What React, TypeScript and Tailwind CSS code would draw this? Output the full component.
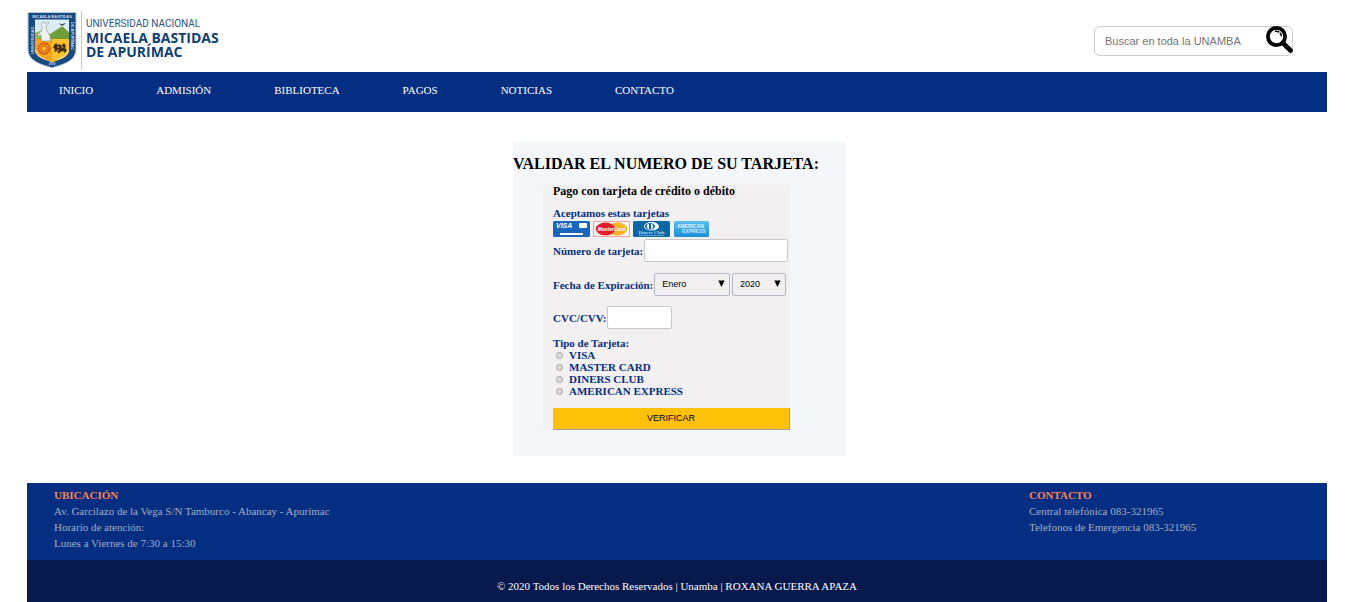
import React from "react";

const navItems = ["INICIO", "ADMISIÓN", "BIBLIOTECA", "PAGOS", "NOTICIAS", "CONTACTO"];
const cardTypes = ["VISA", "MASTER CARD", "DINERS CLUB", "AMERICAN EXPRESS"];
const months = [
  "Enero", "Febrero", "Marzo", "Abril", "Mayo", "Junio",
  "Julio", "Agosto", "Septiembre", "Octubre", "Noviembre", "Diciembre",
];
const years = ["2020", "2021", "2022", "2023", "2024", "2025"];

function Crest() {
  return (
    <svg viewBox="0 0 50 58" className="h-[58px] w-[50px] shrink-0" aria-hidden="true">
      <path d="M1 1.500h48v37c0 9-8 13-15 15.500-4 1.300-7 2-9 3-2-1-5-1.700-9-3C9 51.500 1 47.500 1 38.500z" fill="#174a80" stroke="#b9c9dc" strokeWidth="1" />
      <path d="M8 8.500h34v30c0 6-6 9-11 10.500-3 1-5 1.500-6 2.500-1-1-3-1.500-6-2.500-5-1.500-11-4.500-11-10.500z" fill="#d9edf6" />
      <path d="M8 22l7-3 6 5 8-5 6-4 7 6v10H8z" fill="#93b64a" />
      <path d="M20 26l10-7 6-3 6 6v8H20z" fill="#6e9d3a" />
      <path d="M8 28h34v10.500c0 6-6 9-11 10.500-3 1-5 1.500-6 2.500-1-1-3-1.500-6-2.500-5-1.500-11-4.500-11-10.500z" fill="#f6a31c" />
      <path d="M25 28h17v10.500c0 6-6 9-11 10.500-3 1-5 1.500-6 2.500z" fill="#fac12b" />
      <path d="M17 10.500l1.500 2.500 3-2 .5 1-3 3 1 5 3 5 .5 5h-9l-.5-6-3 1-.5-1 4-4 1-4-1.500-3z" fill="#eef1f0" stroke="#8b9a8d" strokeWidth=".6" />
      <path d="M32 12l2.500 1.300L39 12l-3 2.500h-2z" fill="#33434b" />
      <circle cx="17" cy="37.500" r="5.500" fill="#f58a12" stroke="#c64a17" strokeWidth="1.500" strokeDasharray="1.500 .8" />
      <circle cx="17" cy="37.500" r="2.700" fill="#fbc02d" stroke="#b94c1a" strokeWidth=".8" />
      <path d="M27 34l2-2 2 2 2-1 1 2 3-3 2 3-1 2 2 2-2 3-2-2-3 1-1 2-2-3-3 1 1-3-2-1z" fill="#432e1d" />
      <path d="M30 35l2 2m3-2l1 2m-6 3l2-1" stroke="#fac12b" strokeWidth=".9" />
      <path d="M8.500 39c1 5 6 8 10.500 9.300M41.500 39c-1 5-6 8-10.500 9.300" stroke="#fff" strokeWidth=".7" fill="none" />
      <text x="25" y="6.500" textAnchor="middle" fill="#cfdae6" className="font-['Liberation_Sans'] text-[4px] font-bold">MICAELA BASTIDAS</text>
      <text transform="translate(6.500 43) rotate(-90)" fill="#cfdae6" className="font-['Liberation_Sans'] text-[4px] font-bold">UNIVERSIDAD</text>
      <text transform="translate(43.500 11) rotate(90)" fill="#cfdae6" className="font-['Liberation_Sans'] text-[4px] font-bold">DE APURÍMAC</text>
      <text x="25" y="54" textAnchor="middle" fill="#cfdae6" className="font-['Liberation_Sans'] text-[3px] font-bold">2000</text>
    </svg>
  );
}

function Magnifier() {
  return (
    <svg viewBox="0 0 27 27" className="h-[27px] w-[27px]" aria-hidden="true">
      <circle cx="10.500" cy="10.500" r="8.600" fill="#fff" stroke="#000" strokeWidth="3.800" />
      <path d="M17 17l7.500 7.500" stroke="#000" strokeWidth="4.600" strokeLinecap="round" />
      <path d="M9.500 5.200c1.300-.1 2.300.1 3.200.7M14.300 7.300c.6.700.9 1.400 1 2.400" fill="none" stroke="#000" strokeWidth="1.500" strokeLinecap="round" />
    </svg>
  );
}

function CardLogos() {
  return (
    <div className="mt-0.5 flex h-4 gap-[3px]">
      <svg viewBox="0 0 37 16" className="h-4 w-[37px]" role="img" aria-label="Visa">
        <rect width="37" height="16" rx="1.500" fill="#1866bd" />
        <text x="3" y="7" fill="#fff" className="font-['Liberation_Sans'] text-[7px] font-bold italic">VISA</text>
        <rect x="26" y="2" width="8" height="5" rx="1" fill="#fff" />
        <rect x="7" y="12" width="23" height="2" fill="#fff" />
      </svg>
      <svg viewBox="0 0 37 16" className="h-4 w-[37px]" role="img" aria-label="MasterCard">
        <rect x=".5" y=".5" width="36" height="15" fill="#fbf6f6" stroke="#f3a2a2" />
        <ellipse cx="24.500" cy="8" rx="9.800" ry="6.500" fill="#fbb323" />
        <ellipse cx="12.500" cy="8" rx="9.800" ry="6.500" fill="#e31b2d" />
        <text x="18.500" y="10" textAnchor="middle" fill="#fff" className="font-['Liberation_Sans'] text-[5px] font-bold italic">MasterCard</text>
      </svg>
      <svg viewBox="0 0 37 16" className="h-4 w-[37px]" role="img" aria-label="Diners Club">
        <rect width="37" height="16" rx="1.500" fill="#0768a5" />
        <ellipse cx="18.500" cy="5.300" rx="7.500" ry="4.300" fill="#fff" />
        <ellipse cx="17" cy="5.300" rx="5" ry="3.300" fill="#0768a5" />
        <path d="M16 2.500c-3 .8-3 4.800 0 5.600zm2 0c3 .8 3 4.800 0 5.600z" fill="#fff" />
        <text x="18.500" y="13" textAnchor="middle" fill="#b9d8ec" className="font-['Liberation_Serif'] text-[5px]">Diners Club</text>
        <path d="M6 14.500h25" stroke="#7fb4d6" strokeDasharray="1.500 .5" />
      </svg>
      <svg viewBox="0 0 37 16" className="h-4 w-[37px]" role="img" aria-label="American Express">
        <defs>
          <linearGradient id="amex" x1="0" y1="0" x2="0" y2="1">
            <stop offset="0" stopColor="#58c1ed" />
            <stop offset="1" stopColor="#1d8fd8" />
          </linearGradient>
        </defs>
        <rect x="1" width="35" height="16" rx="1.500" fill="url(#amex)" />
        <text x="4" y="7" fill="#e4f4fc" className="font-['Liberation_Sans'] text-[5px] font-bold">AMERICAN</text>
        <text x="9" y="12" fill="#c4e7f8" className="font-['Liberation_Sans'] text-[5px] font-bold">EXPRESS</text>
      </svg>
    </div>
  );
}

type DropDownProps = { id?: string; label?: string; options: string[]; className: string };

function DropDown({ id, label, options, className }: DropDownProps) {
  return (
    <span className={`relative ${className}`}>
      <select
        id={id}
        aria-label={label}
        className="block h-[23px] w-full appearance-none rounded-[2px] border border-[#b4b6c8] bg-[#f2f0f1] pb-0.5 pl-[7px] font-['Liberation_Sans',sans-serif] text-[9px] font-normal text-black"
      >
        {options.map((o) => (
          <option key={o}>{o}</option>
        ))}
      </select>
      <svg viewBox="0 0 7 7" className="pointer-events-none absolute top-[7px] right-[5px] size-[7px]" aria-hidden="true">
        <path d="M.3.500h6.400L3.500 7z" />
      </svg>
    </span>
  );
}

const textBox = "h-[23px] min-w-0 rounded-[2px] border border-[#c8c8c8] bg-white px-1.5 font-['Liberation_Sans',sans-serif] text-[9px] font-normal text-black";

export default function App() {
  return (
    <div className="mr-6 ml-[27px] font-['Liberation_Serif',serif] text-[11px] leading-3">
      <header className="flex items-start justify-between pr-[34px]">
        <a href="#inicio" className="mt-[11px] mb-[3px] flex text-[#114077]">
          <Crest />
          <span className="ml-1 border-l border-[#b8c7da] pt-1.5 pl-1 font-['Open_Sans',sans-serif] text-[14px] leading-[14px] font-bold">
            <span className="block font-['Roboto',sans-serif] text-[10px] font-normal text-[#2a5585]">UNIVERSIDAD NACIONAL</span>
            <span className="block">MICAELA BASTIDAS</span>
            <span className="block">DE APURÍMAC</span>
          </span>
        </a>
        <form className="relative mt-[26px]" onSubmit={(e) => e.preventDefault()}>
          <input
            type="search"
            aria-label="Buscar en toda la UNAMBA"
            placeholder="Buscar en toda la UNAMBA"
            className="block h-[30px] w-[199px] rounded-[6px] border border-[#ccc] pr-8 pl-2.5 font-['Liberation_Sans',sans-serif] text-[11px] placeholder:text-[#757575]"
          />
          <button type="submit" aria-label="Buscar" className="absolute top-0 right-0">
            <Magnifier />
          </button>
        </form>
      </header>

      <nav className="h-10 bg-[#042e82] px-8 pt-3 text-white">
        <ul className="flex gap-[63px]">
          {navItems.map((item) => (
            <li key={item}>
              <a href="#" className="hover:underline">{item}</a>
            </li>
          ))}
        </ul>
      </nav>

      <main className="flex justify-center pt-[30px] pb-[27px] pl-[5px]">
        <section className="w-[333px] bg-[#f3f7fa] pt-3 pb-[26px]">
          <h1 className="text-[16px] leading-5 font-bold whitespace-nowrap">VALIDAR EL NUMERO DE SU TARJETA:</h1>
          <form
            className="mt-[11px] mr-14 ml-[30px] bg-[#f3f0f1] pl-2.5 font-bold text-[#042e82]"
            onSubmit={(e) => e.preventDefault()}
          >
            <h2 className="text-[12px] text-black">Pago con tarjeta de crédito o débito</h2>
            <p className="mt-2.5">Aceptamos estas tarjetas</p>
            <CardLogos />
            <div className="mt-0.5 flex items-center gap-px pr-0.5">
              <label htmlFor="numero">Número de tarjeta:</label>
              <input id="numero" type="text" inputMode="numeric" className={`${textBox} flex-1`} />
            </div>
            <div className="mt-[11px] flex items-center gap-px pr-1">
              <label htmlFor="mes" className="whitespace-nowrap">Fecha de Expiración:</label>
              <DropDown id="mes" options={months} className="flex-1" />
              <DropDown label="Año de expiración" options={years} className="ml-px w-[54px]" />
            </div>
            <div className="mt-2.5 flex items-center gap-px">
              <label htmlFor="cvc">CVC/CVV:</label>
              <input id="cvc" type="text" inputMode="numeric" className={`${textBox} w-[65px]`} />
            </div>
            <fieldset className="mt-2">
              <legend>Tipo de Tarjeta:</legend>
              {cardTypes.map((type) => (
                <label key={type} className="flex items-center gap-1.5 pl-[3px]">
                  <input
                    type="radio"
                    name="tipo"
                    value={type}
                    className="size-[7px] appearance-none rounded-full border border-[#a0a0a0] bg-[#dedede] checked:bg-[#444]"
                  />
                  {type}
                </label>
              ))}
            </fieldset>
            <button
              type="submit"
              className="mt-[11px] block h-[22px] w-full border-r border-b border-[#a39d93] bg-[#ffc107] pb-0.5 font-['Liberation_Sans',sans-serif] text-[9px] font-normal text-black"
            >
              VERIFICAR
            </button>
          </form>
        </section>
      </main>

      <footer>
        <div className="grid h-[77px] grid-cols-4 bg-[#042e82] pt-1 leading-4 text-[#a3afbf]">
          <section className="col-span-3 pl-[27px]">
            <h2 className="font-bold text-[#fb8351]">UBICACIÓN</h2>
            <p>Av. Garcilazo de la Vega S/N Tamburco - Abancay - Apurímac</p>
            <p>Horario de atención:</p>
            <p>Lunes a Viernes de 7:30 a 15:30</p>
          </section>
          <section className="pl-[27px]">
            <h2 className="font-bold text-[#fb8351]">CONTACTO</h2>
            <p>Central telefónica 083-321965</p>
            <p>Telefonos de Emergencia 083-321965</p>
          </section>
        </div>
        <p className="bg-[#07194d] pt-5 pb-2.5 text-center text-white">
          © 2020 Todos los Derechos Reservados | Unamba | ROXANA GUERRA APAZA
        </p>
      </footer>
    </div>
  );
}
